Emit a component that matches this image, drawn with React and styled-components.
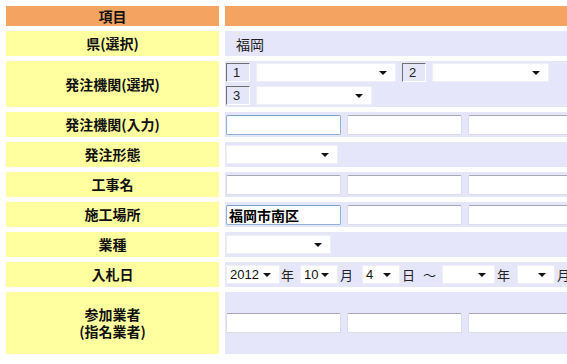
import React from 'react'
import styled, { createGlobalStyle } from 'styled-components'

const GlobalStyle = createGlobalStyle`
  body {
    margin: 0;
    background: #fff;
    overflow: hidden;
    font-family: "Liberation Sans", "Noto Sans CJK JP", sans-serif;
  }
`

const Grid = styled.div`
  display: grid;
  grid-template-columns: 213px 420px;
  grid-template-rows: 20px 25px 46px repeat(6, 25px) 62px;
  column-gap: 6px;
  row-gap: 5px;
  padding: 6px 0 0 6px;
`

const Head = styled.div`
  background: #f4a460;
  display: flex;
  align-items: center;
  justify-content: center;
  font-family: "Noto Sans CJK JP", sans-serif;
  font-weight: bold;
  font-size: 14px;
  color: #111;
`

const Label = styled.div`
  background: #ffffa0;
  display: flex;
  align-items: center;
  justify-content: center;
  text-align: center;
  font-family: "Noto Sans CJK JP", sans-serif;
  font-weight: bold;
  font-size: 14px;
  line-height: 17px;
  color: #111;
`

const Cell = styled.div`
  background: #e6e6fa;
  display: flex;
  flex-direction: ${p => (p.$stack ? 'column' : 'row')};
  align-items: ${p => (p.$stack ? 'flex-start' : 'center')};
  justify-content: ${p => (p.$stack ? 'center' : 'flex-start')};
  gap: ${p => (p.$stack ? '4px' : p.$tight ? '0' : '6px')};
  padding-left: ${p => p.$pad || 1}px;
  font-family: "Noto Sans CJK JP", sans-serif;
  font-size: 14px;
  color: #222;
`

const Line = styled.div`
  display: flex;
  align-items: center;
  gap: 6px;
`

const TextBox = styled.input`
  box-sizing: border-box;
  width: 115px;
  height: 20px;
  margin: 0;
  padding: 0 2px;
  background: #fff;
  border: 1px solid ${p => (p.$focus ? '#8fb2d6' : '#dcdce8')};
  border-top-color: ${p => (p.$focus ? '#7aa0c8' : '#a8a8b4')};
  border-radius: 2px;
  font-family: "Noto Sans CJK JP", sans-serif;
  font-weight: bold;
  font-size: 14px;
  color: #000;
  outline: none;
`

const Num = styled.div`
  box-sizing: border-box;
  width: 24px;
  height: 19px;
  border: 1px solid #fff;
  border-top-color: #707070;
  border-left-color: #707070;
  background: #e6e6fa;
  font-family: "Liberation Sans", sans-serif;
  font-size: 13px;
  padding-left: 6px;
  line-height: 17px;
  color: #222;
`

const SelectBox = styled.div`
  box-sizing: border-box;
  width: ${p => p.$w}px;
  height: 19px;
  background: #fff;
  border: 1px solid #eeeef6;
  display: flex;
  align-items: center;
  justify-content: space-between;
  padding: 0 8px 0 3px;
  font-family: "Liberation Sans", sans-serif;
  font-size: 13px;
  color: #111;
`

const Arrow = styled.span`
  width: 0;
  height: 0;
  border-left: 4px solid transparent;
  border-right: 4px solid transparent;
  border-top: 4px solid #111;
`

const Unit = styled.span`
  font-size: 13px;
  line-height: 19px;
  margin: 0 ${p => p.$r || 0}px 0 ${p => p.$l || 0}px;
  color: #222;
`

function Select({ w, value }) {
  return (
    <SelectBox $w={w}>
      <span>{value}</span>
      <Arrow />
    </SelectBox>
  )
}

function Texts({ first, focus }) {
  return (
    <>
      <TextBox $focus={focus} defaultValue={first || ''} />
      <TextBox />
      <TextBox />
    </>
  )
}

export default function App() {
  return (
    <>
      <GlobalStyle />
      <Grid>
        <Head>項目</Head>
        <Head />

        <Label>県(選択)</Label>
        <Cell $pad={11}>福岡</Cell>

        <Label>発注機関(選択)</Label>
        <Cell $stack>
          <Line>
            <Num>1</Num>
            <Select w={140} />
            <Num>2</Num>
            <Select w={117} />
          </Line>
          <Line>
            <Num>3</Num>
            <Select w={116} />
          </Line>
        </Cell>

        <Label>発注機関(入力)</Label>
        <Cell><Texts focus /></Cell>

        <Label>発注形態</Label>
        <Cell><Select w={112} /></Cell>

        <Label>工事名</Label>
        <Cell><Texts /></Cell>

        <Label>施工場所</Label>
        <Cell><Texts first="福岡市南区" focus /></Cell>

        <Label>業種</Label>
        <Cell><Select w={105} /></Cell>

        <Label>入札日</Label>
        <Cell $tight>
          <Select w={54} value="2012" />
          <Unit $l={1} $r={6}>年</Unit>
          <Select w={38} value="10" />
          <Unit $l={2} $r={9}>月</Unit>
          <Select w={38} value="4" />
          <Unit $l={2}>日</Unit>
          <Unit $l={8} $r={6}>～</Unit>
          <Select w={53} />
          <Unit $l={2} $r={7}>年</Unit>
          <Select w={38} />
          <Unit $l={2}>月</Unit>
        </Cell>

        <Label>参加業者<br />(指名業者)</Label>
        <Cell><Texts /></Cell>
      </Grid>
    </>
  )
}
